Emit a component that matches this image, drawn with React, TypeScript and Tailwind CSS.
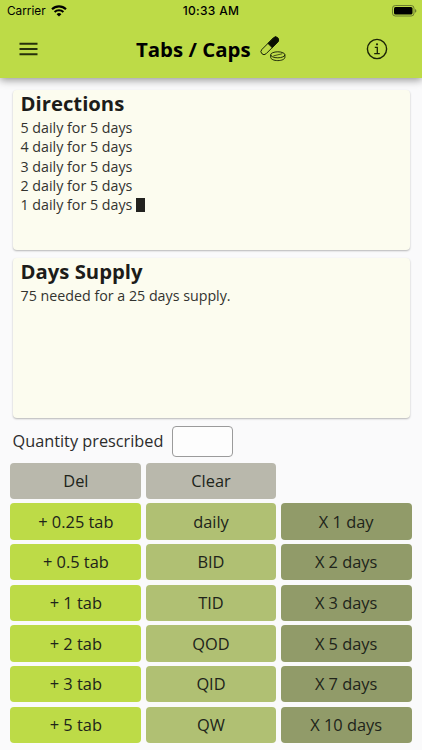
import React from "react";

const rows = [
  ["+ 0.25 tab", "daily", "X 1 day"],
  ["+ 0.5 tab", "BID", "X 2 days"],
  ["+ 1 tab", "TID", "X 3 days"],
  ["+ 2 tab", "QOD", "X 5 days"],
  ["+ 3 tab", "QID", "X 7 days"],
  ["+ 5 tab", "QW", "X 10 days"],
];

const columnColors = ["bg-[#bddb47]", "bg-[#b0c073]", "bg-[#919b69]"];

const directions = [5, 4, 3, 2, 1];

function Key({ label, color }: { label: string; color: string }) {
  return (
    <button className={`${color} h-[36.5px] pt-[1px] rounded-[4px] text-[16.4px] leading-none text-[#20241a] flex items-center justify-center`}>
      {label}
    </button>
  );
}

function StatusBar() {
  return (
    <div className="h-[22px] grid grid-cols-3 items-center px-[7px] font-['Inter','Liberation_Sans',sans-serif] text-black">
      <div className="flex items-center gap-[5px] text-[11.8px] pt-px">
        <span>Carrier</span>
        <svg className="w-[16px] h-[12px] -mt-[2px]" viewBox="0 0 16 12" fill="none" stroke="#000" strokeWidth="2.1">
          <path d="M1 4.2a10 10 0 0 1 14 0" />
          <path d="M3.6 7.1a6.3 6.3 0 0 1 8.8 0" />
          <path d="M8 11.6 5.6 9.2a3.4 3.4 0 0 1 4.8 0Z" fill="#000" stroke="none" />
        </svg>
      </div>
      <div className="text-center text-[12px] font-medium tracking-[0.3px] whitespace-nowrap">10:33 AM</div>
      <svg className="w-[25px] h-[12px] justify-self-end -mr-[2px] -mt-[1px]" viewBox="0 0 25 12">
        <rect x="0.5" y="0.5" width="21.5" height="10.5" rx="2.8" fill="none" stroke="#57652a" strokeWidth="0.8" />
        <rect x="2" y="2" width="18.5" height="7.5" rx="1.5" fill="#000" />
        <path d="M23.2 4v3.8c1.5-.6 1.5-3.2 0-3.8Z" fill="#57652a" />
      </svg>
    </div>
  );
}

function PillIcon() {
  return (
    <svg className="w-[26px] h-[26px]" viewBox="0 0 26 26" fill="none" stroke="#111a05" strokeWidth="0.9">
      <g transform="rotate(-45 9.8 9.8)">
        <rect x="-1.4" y="6.8" width="22.4" height="6" rx="3" />
        <path d="M10.2 6.8h7.8a3 3 0 0 1 0 6h-7.8Z" fill="#0a0f02" />
      </g>
      <ellipse cx="17.8" cy="18.8" rx="7.1" ry="3" />
      <path d="M10.7 18.8v2.5c0 1.9 3.2 3.3 7.1 3.3s7.1-1.4 7.1-3.3v-2.5" />
      <path d="m13.4 19.9 9-2.2" strokeWidth="0.7" />
    </svg>
  );
}

export default function App() {
  return (
    <div className="w-full h-[750px] overflow-hidden bg-[#fafafb] font-['Open_Sans','Noto_Sans',sans-serif] text-[#222]">
      <header className="h-[78px] bg-[#bddb47] shadow-[0_2px_8px_rgba(0,0,0,0.42)]">
        <StatusBar />
        <div className="h-[55px] flex items-center pl-[19px] pr-[34px]">
          <button aria-label="Menu" className="-mt-[1px]">
            <svg className="w-[19px] h-[14px]" viewBox="0 0 19 14" stroke="#26300b" strokeWidth="1.9">
              <path d="M0.5 1.7h18M0.5 7h18M0.5 12.3h18" />
            </svg>
          </button>
          <div className="flex items-center ml-[98px]">
            <h1 className="w-[115px] text-[20.4px] font-bold text-black whitespace-nowrap">Tabs / Caps</h1>
            <div className="ml-[9px] -mt-[1px]">
              <PillIcon />
            </div>
          </div>
          <button aria-label="Info" className="ml-auto -mt-[1px]">
            <svg className="w-[22px] h-[22px]" viewBox="0 0 22 22" fill="none" stroke="#1b2407" strokeWidth="1.4">
              <circle cx="11" cy="11" r="9.6" />
              <path d="M8.8 9.3h2.5v6.2M8.2 15.6h5.6" strokeWidth="1.3" />
              <circle cx="11" cy="6.3" r="1.1" fill="#1b2407" stroke="none" />
            </svg>
          </button>
        </div>
      </header>

      <main className="pt-[12px]">
        <div className="px-[12.5px] flex flex-col gap-[8px]">
          <section className="h-[160px] rounded-[4px] bg-[#fcfcef] px-[8px] shadow-[0_1px_2px_rgba(0,0,0,0.28)]">
            <h2 className="text-[20.3px] font-bold leading-[26.5px] pb-[1.5px] text-[#1c1c1a]">Directions</h2>
            {directions.map((n) => (
              <p key={n} className="text-[14.25px] leading-[19.35px] text-[#33332f]">
                {n} daily for 5 days
                {n === 1 && <span className="inline-block w-[9px] h-[14px] ml-[3.5px] align-[-2px] bg-[#22221f]" />}
              </p>
            ))}
          </section>
          <section className="h-[160px] rounded-[4px] bg-[#fcfcef] px-[8px] shadow-[0_1px_2px_rgba(0,0,0,0.28)]">
            <h2 className="text-[20.3px] font-bold leading-[26.5px] pb-[1.5px] text-[#1c1c1a]">Days Supply</h2>
            <p className="text-[14.25px] leading-[19.35px] text-[#33332f]">75 needed for a 25 days supply.</p>
          </section>
        </div>

        <label className="flex items-center h-[31px] mt-[8px] ml-[12.5px] text-[16.3px] text-[#2c2c2c]">
          <span className="w-[159.5px] pb-px whitespace-nowrap">Quantity prescribed</span>
          <input className="w-[61px] h-[31px] rounded-[4px] border border-[#9b9b9b] bg-[#fdfdfd]" />
        </label>

        <div className="grid grid-cols-3 gap-[4.2px] mt-[5.5px] px-[10.4px]">
          <Key label="Del" color="bg-[#b9b8ac]" />
          <Key label="Clear" color="bg-[#b9b8ac]" />
          <span />
          {rows.map((row) =>
            row.map((label, i) => <Key key={label} label={label} color={columnColors[i]} />)
          )}
        </div>
      </main>
    </div>
  );
}
